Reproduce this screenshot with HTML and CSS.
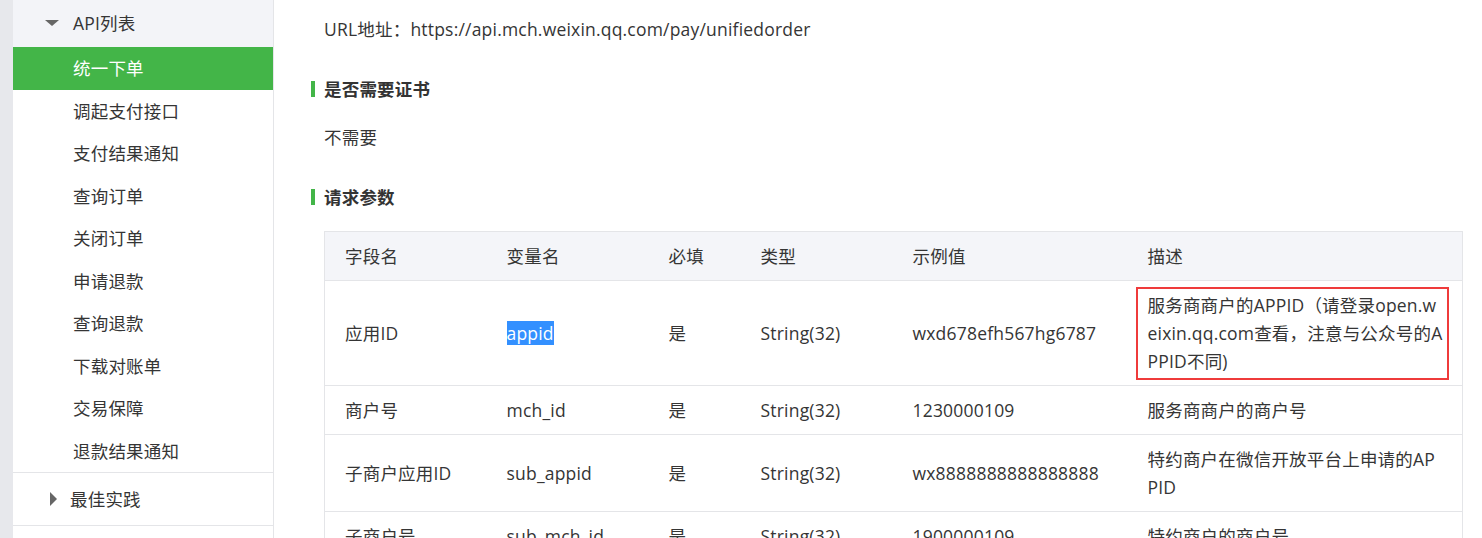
FILE: index.html
```html
<!DOCTYPE html>
<html lang="zh-CN">
<head>
  <meta charset="UTF-8">
  <title>统一下单 - API列表</title>
  <link rel="stylesheet" href="styles.css">
</head>
<body>
  <div class="gutter"></div>

  <aside class="sidebar">
    <div class="group-title open"><span class="arrow-down"></span>API列表</div>
    <ul class="menu">
      <li class="active">统一下单</li>
      <li>调起支付接口</li>
      <li>支付结果通知</li>
      <li>查询订单</li>
      <li>关闭订单</li>
      <li>申请退款</li>
      <li>查询退款</li>
      <li>下载对账单</li>
      <li>交易保障</li>
      <li>退款结果通知</li>
    </ul>
    <div class="group-title closed"><span class="arrow-right"></span>最佳实践</div>
  </aside>

  <main class="content">
    <p class="text">URL地址：https://api.mch.weixin.qq.com/pay/unifiedorder</p>

    <h3 class="section-title">是否需要证书</h3>
    <p class="text">不需要</p>

    <h3 class="section-title">请求参数</h3>
    <table class="params">
      <colgroup>
        <col style="width: 162px">
        <col style="width: 162px">
        <col style="width: 92px">
        <col style="width: 152px">
        <col style="width: 235px">
        <col style="width: 335px">
      </colgroup>
      <thead>
        <tr>
          <th>字段名</th>
          <th>变量名</th>
          <th>必填</th>
          <th>类型</th>
          <th>示例值</th>
          <th>描述</th>
        </tr>
      </thead>
      <tbody>
        <tr>
          <td>应用ID</td>
          <td><span class="selected">appid</span></td>
          <td>是</td>
          <td>String(32)</td>
          <td>wxd678efh567hg6787</td>
          <td class="desc marked">服务商商户的APPID（请登录open.weixin.qq.com查看，注意与公众号的APPID不同)<span class="mark-box"></span></td>
        </tr>
        <tr>
          <td>商户号</td>
          <td>mch_id</td>
          <td>是</td>
          <td>String(32)</td>
          <td>1230000109</td>
          <td class="desc">服务商商户的商户号</td>
        </tr>
        <tr>
          <td>子商户应用ID</td>
          <td>sub_appid</td>
          <td>是</td>
          <td>String(32)</td>
          <td>wx8888888888888888</td>
          <td class="desc">特约商户在微信开放平台上申请的APPID</td>
        </tr>
        <tr>
          <td>子商户号</td>
          <td>sub_mch_id</td>
          <td>是</td>
          <td>String(32)</td>
          <td>1900000109</td>
          <td class="desc">特约商户的商户号</td>
        </tr>
      </tbody>
    </table>
  </main>
</body>
</html>
```

FILE: styles.css
```css
body {
  margin: 0;
  display: flex;
  height: 538px;
  overflow: hidden;
  font-family: "Open Sans", "Noto Sans CJK SC", sans-serif;
  font-size: 17.5px;
  letter-spacing: 0.2px;
  color: #353535;
  background: #fff;
}

.gutter {
  width: 13px;
  flex: none;
  background: #e7e8ec;
}

/* sidebar */
.sidebar {
  width: 260px;
  flex: none;
  border-right: 1px solid #e4e5e8;
  background: #fff;
}

.group-title {
  display: flex;
  align-items: center;
  line-height: 28px;
}

.group-title.open {
  height: 47px;
  padding: 0 0 2px 32px;
  box-sizing: border-box;
  background: #f3f4f8;
}

.group-title.closed {
  height: 52px;
  padding-left: 37px;
  border-top: 1px solid #e4e5e8;
  border-bottom: 1px solid #e4e5e8;
}

.arrow-down {
  width: 0;
  height: 0;
  border-left: 7px solid transparent;
  border-right: 7px solid transparent;
  border-top: 6px solid #666;
  margin-right: 14px;
}

.arrow-right {
  width: 0;
  height: 0;
  border-top: 7px solid transparent;
  border-bottom: 7px solid transparent;
  border-left: 7px solid #666;
  margin-right: 13px;
}

.menu {
  list-style: none;
  margin: 0;
  padding: 0;
}

.menu li {
  height: 42.5px;
  line-height: 42.5px;
  padding-left: 60px;
  color: #353535;
}

.menu li.active {
  background: #43b548;
  color: #fff;
}

/* main content */
.content {
  flex: 1;
  padding: 15px 0 0 37px;
  min-width: 0;
}

.text {
  margin: 0 0 32px 13px;
  line-height: 28px;
}

.section-title {
  display: flex;
  align-items: center;
  margin: 0 0 20px;
  font-size: 17.5px;
  font-weight: bold;
  line-height: 28px;
  color: #333;
}

.section-title::before {
  content: "";
  width: 4px;
  height: 16px;
  margin-right: 9px;
  background: #43b548;
}

.params {
  margin-left: 13px;
  width: 1138px;
  table-layout: fixed;
  border-collapse: collapse;
  border: 1px solid #e4e5e8;
}

.params th,
.params td {
  padding: 10px 20px;
  line-height: 28px;
  text-align: left;
  font-weight: normal;
  border-bottom: 1px solid #e4e5e8;
}

.params th {
  background: #f4f5f9;
}

.params td.desc {
  word-break: break-all;
}

.params td.marked {
  position: relative;
  padding-right: 16px;
}

.mark-box {
  position: absolute;
  left: 8px;
  right: 13px;
  top: 6px;
  bottom: 5px;
  border: 2px solid #ef3b3b;
}

.selected {
  background: #3390ff;
  color: #fff;
}
```
